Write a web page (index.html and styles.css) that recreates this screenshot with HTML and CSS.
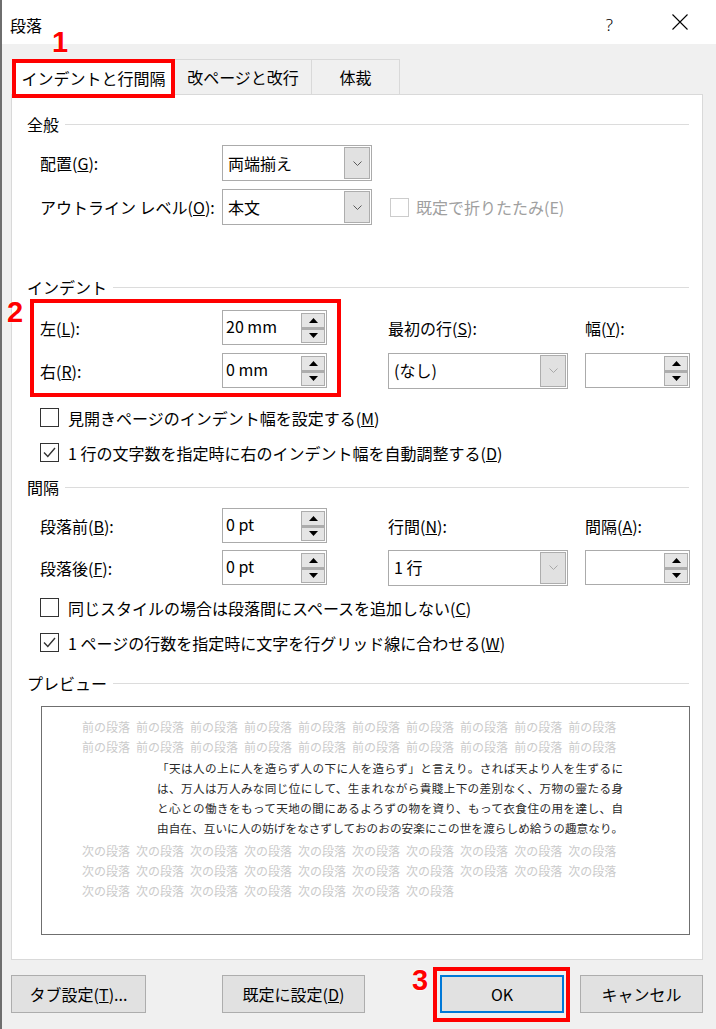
FILE: index.html
```html
<!DOCTYPE html>
<html lang="ja">
<head>
    <meta charset="UTF-8">
    <meta name="viewport" content="width=device-width, initial-scale=1.0">
    <title>段落</title>
    <link rel="stylesheet" href="styles.css">
</head>
<body>
<div class="window">
    <div class="titlebar">
        <span class="title">段落</span>
        <span class="help">?</span>
        <svg class="close" width="16" height="16" viewBox="0 0 16 16"><path d="M0.5 0.5 L15.5 15.5 M15.5 0.5 L0.5 15.5" stroke="#000" stroke-width="1.1" fill="none"/></svg>
    </div>

    <div class="main">
        <div class="tabs">
            <div class="tab tab-1 active">インデントと行間隔</div>
            <div class="tab tab-2">改ページと改行</div>
            <div class="tab tab-3">体裁</div>
        </div>

        <div class="panel">
            <!-- 全般 -->
            <section class="group">
                <div class="group-head"><span>全般</span></div>
                <div class="general-grid">
                    <div class="label">配置(<u>G</u>):</div>
                    <div class="select w150"><span class="val">両端揃え</span><span class="drop"><svg width="9" height="5" viewBox="0 0 9 5"><polyline points="0.5,0.5 4.5,4.5 8.5,0.5" fill="none" stroke="#5a5a5a"/></svg></span></div>
                    <div></div>
                    <div></div>

                    <div class="label">アウトライン レベル(<u>O</u>):</div>
                    <div class="select w150"><span class="val">本文</span><span class="drop"><svg width="9" height="5" viewBox="0 0 9 5"><polyline points="0.5,0.5 4.5,4.5 8.5,0.5" fill="none" stroke="#5a5a5a"/></svg></span></div>
                    <div></div>
                    <div class="check disabled"><span class="box"></span>既定で折りたたみ(E)</div>
                </div>
            </section>

            <!-- インデント -->
            <section class="group indent">
                <div class="group-head"><span>インデント</span></div>
                <div class="field-grid">
                    <div class="label">左(<u>L</u>):</div>
                    <div class="spin"><span class="val">20 mm</span><span class="arrows"><span class="arr"><svg width="9" height="5" viewBox="0 0 9 5"><polygon points="0,5 4.5,0 9,5" fill="#000"/></svg></span><span class="arr"><svg width="9" height="5" viewBox="0 0 9 5"><polygon points="0,0 4.5,5 9,0" fill="#000"/></svg></span></span></div>
                    <div></div>
                    <div class="label">最初の行(<u>S</u>):</div>
                    <div></div>
                    <div class="label">幅(<u>Y</u>):</div>

                    <div class="label">右(<u>R</u>):</div>
                    <div class="spin"><span class="val">0 mm</span><span class="arrows"><span class="arr"><svg width="9" height="5" viewBox="0 0 9 5"><polygon points="0,5 4.5,0 9,5" fill="#000"/></svg></span><span class="arr"><svg width="9" height="5" viewBox="0 0 9 5"><polygon points="0,0 4.5,5 9,0" fill="#000"/></svg></span></span></div>
                    <div></div>
                    <div class="select"><span class="val">(なし)</span><span class="drop"><svg width="9" height="5" viewBox="0 0 9 5"><polyline points="0.5,0.5 4.5,4.5 8.5,0.5" fill="none" stroke="#a8a8a8"/></svg></span></div>
                    <div></div>
                    <div class="spin"><span class="val"></span><span class="arrows"><span class="arr"><svg width="9" height="5" viewBox="0 0 9 5"><polygon points="0,5 4.5,0 9,5" fill="#000"/></svg></span><span class="arr"><svg width="9" height="5" viewBox="0 0 9 5"><polygon points="0,0 4.5,5 9,0" fill="#000"/></svg></span></span></div>
                </div>
                <div class="checks">
                    <div class="check"><span class="box"></span>見開きページのインデント幅を設定する(<u>M</u>)</div>
                    <div class="check"><span class="box"><svg width="13" height="11" viewBox="0 0 13 11"><polyline points="1,5.5 4.8,9.5 12,1" fill="none" stroke="#333" stroke-width="1.4"/></svg></span>1 行の文字数を指定時に右のインデント幅を自動調整する(<u>D</u>)</div>
                </div>
            </section>

            <!-- 間隔 -->
            <section class="group spacing">
                <div class="group-head"><span>間隔</span></div>
                <div class="field-grid">
                    <div class="label">段落前(<u>B</u>):</div>
                    <div class="spin"><span class="val">0 pt</span><span class="arrows"><span class="arr"><svg width="9" height="5" viewBox="0 0 9 5"><polygon points="0,5 4.5,0 9,5" fill="#000"/></svg></span><span class="arr"><svg width="9" height="5" viewBox="0 0 9 5"><polygon points="0,0 4.5,5 9,0" fill="#000"/></svg></span></span></div>
                    <div></div>
                    <div class="label">行間(<u>N</u>):</div>
                    <div></div>
                    <div class="label">間隔(<u>A</u>):</div>

                    <div class="label">段落後(<u>F</u>):</div>
                    <div class="spin"><span class="val">0 pt</span><span class="arrows"><span class="arr"><svg width="9" height="5" viewBox="0 0 9 5"><polygon points="0,5 4.5,0 9,5" fill="#000"/></svg></span><span class="arr"><svg width="9" height="5" viewBox="0 0 9 5"><polygon points="0,0 4.5,5 9,0" fill="#000"/></svg></span></span></div>
                    <div></div>
                    <div class="select"><span class="val">1 行</span><span class="drop"><svg width="9" height="5" viewBox="0 0 9 5"><polyline points="0.5,0.5 4.5,4.5 8.5,0.5" fill="none" stroke="#a8a8a8"/></svg></span></div>
                    <div></div>
                    <div class="spin"><span class="val"></span><span class="arrows"><span class="arr"><svg width="9" height="5" viewBox="0 0 9 5"><polygon points="0,5 4.5,0 9,5" fill="#000"/></svg></span><span class="arr"><svg width="9" height="5" viewBox="0 0 9 5"><polygon points="0,0 4.5,5 9,0" fill="#000"/></svg></span></span></div>
                </div>
                <div class="checks">
                    <div class="check"><span class="box"></span>同じスタイルの場合は段落間にスペースを追加しない(<u>C</u>)</div>
                    <div class="check"><span class="box"><svg width="13" height="11" viewBox="0 0 13 11"><polyline points="1,5.5 4.8,9.5 12,1" fill="none" stroke="#333" stroke-width="1.4"/></svg></span>1 ページの行数を指定時に文字を行グリッド線に合わせる(<u>W</u>)</div>
                </div>
            </section>

            <!-- プレビュー -->
            <section class="group preview-group">
                <div class="group-head"><span>プレビュー</span></div>
                <div class="preview">
                    <div class="ghost"><span>前の段落</span><span>前の段落</span><span>前の段落</span><span>前の段落</span><span>前の段落</span><span>前の段落</span><span>前の段落</span><span>前の段落</span><span>前の段落</span><span>前の段落</span></div>
                    <div class="ghost"><span>前の段落</span><span>前の段落</span><span>前の段落</span><span>前の段落</span><span>前の段落</span><span>前の段落</span><span>前の段落</span><span>前の段落</span><span>前の段落</span><span>前の段落</span></div>
                    <div class="sample">
                        <div>「天は人の上に人を造らず人の下に人を造らず」と言えり。されば天より人を生ずるに</div>
                        <div>は、万人は万人みな同じ位にして、生まれながら貴賤上下の差別なく、万物の靈たる身</div>
                        <div>と心との働きをもって天地の間にあるよろずの物を資り、もって衣食住の用を達し、自</div>
                        <div>由自在、互いに人の妨げをなさずしておのおの安楽にこの世を渡らしめ給うの趣意なり。</div>
                    </div>
                    <div class="ghost"><span>次の段落</span><span>次の段落</span><span>次の段落</span><span>次の段落</span><span>次の段落</span><span>次の段落</span><span>次の段落</span><span>次の段落</span><span>次の段落</span><span>次の段落</span></div>
                    <div class="ghost"><span>次の段落</span><span>次の段落</span><span>次の段落</span><span>次の段落</span><span>次の段落</span><span>次の段落</span><span>次の段落</span><span>次の段落</span><span>次の段落</span><span>次の段落</span></div>
                    <div class="ghost"><span>次の段落</span><span>次の段落</span><span>次の段落</span><span>次の段落</span><span>次の段落</span><span>次の段落</span><span>次の段落</span></div>
                </div>
            </section>
        </div>

        <div class="buttons">
            <button class="btn btn-tabs">タブ設定(<u>T</u>)...</button>
            <button class="btn btn-default">既定に設定(<u>D</u>)</button>
            <button class="btn btn-ok">OK</button>
            <button class="btn btn-cancel">キャンセル</button>
        </div>
    </div>
</div>

<!-- 説明用の赤い番号と枠 -->
<span class="mark mark-1">1</span>
<span class="mark mark-2">2</span>
<span class="mark mark-3">3</span>
<div class="redbox redbox-1"></div>
<div class="redbox redbox-2"></div>
<div class="redbox redbox-3"></div>
</body>
</html>
```

FILE: styles.css
```css
body {
    margin: 0;
    background-color: #f0f0f0;
    font-family: "Noto Sans CJK JP", "Noto Sans", sans-serif;
    font-size: 16px;
    color: #000;
}
.window {
    width: 714px;
    height: 1029px;
    border-left: 2px solid #6e6e6e;
    background-color: #f0f0f0;
    overflow: hidden;
}
.titlebar {
    height: 44px;
    box-sizing: border-box;
    padding-top: 5px;
    background-color: #fff;
    display: flex;
    align-items: center;
    padding-left: 8px;
}
.title {
    font-size: 16px;
    line-height: 20px;
}
.help {
    margin-left: auto;
    font-family: "Noto Sans", sans-serif;
    font-size: 17px;
    font-weight: 300;
    line-height: 20px;
}
.close {
    margin-left: 59px;
    margin-right: 28px;
    margin-bottom: 6px;
}
.main {
    padding-top: 15px;
}
.tabs {
    display: flex;
    margin-left: 10px;
    height: 35px;
    position: relative;
    z-index: 1;
}
.tab {
    height: 35px;
    box-sizing: border-box;
    border: 1px solid #d9d9d9;
    border-bottom: none;
    border-left: none;
    display: flex;
    align-items: center;
    justify-content: center;
    font-size: 16px;
}
.tab-1 { width: 163px; }
.tab-2 { width: 137px; }
.tab-3 { width: 88px; }
.tab.active {
    background-color: #fff;
    height: 36px;
    border-left: 1px solid #d9d9d9;
}
.panel {
    margin-left: 9px;
    width: 692px;
    box-sizing: border-box;
    background-color: #fff;
    border: 1px solid #d9d9d9;
    padding: 17px 13px 24px 15px;
}
.group-head {
    display: flex;
    align-items: center;
    height: 24px;
    line-height: 24px;
    gap: 6px;
}
.group-head::after {
    content: "";
    flex: 1;
    height: 1px;
    background-color: #dcdcdc;
}
.indent { margin-top: 50px; }
.spacing { margin-top: 5px; }
.preview-group { margin-top: 11px; }

.general-grid {
    display: grid;
    grid-template-columns: 182px 150px 18px auto;
    grid-template-rows: 36px 36px;
    row-gap: 8px;
    margin: 9px 0 0 13px;
    align-items: center;
}
.field-grid {
    display: grid;
    grid-template-columns: 182px 105px 61px 180px 17px 105px;
    grid-template-rows: 35px 35px;
    row-gap: 8px;
    margin: 11px 0 0 13px;
    align-items: center;
}
.spacing .field-grid {
    margin-top: 9px;
    row-gap: 7px;
}
.label {
    line-height: 22px;
    white-space: nowrap;
}
.select {
    height: 36px;
    box-sizing: border-box;
    border: 1px solid #ababab;
    background-color: #fff;
    display: flex;
    align-items: center;
    padding-left: 5px;
}
.select .val {
    flex: 1;
    padding-bottom: 1px;
}
.drop {
    width: 26px;
    height: 32px;
    margin-right: 1px;
    box-sizing: border-box;
    background-color: #e1e1e1;
    border: 1px solid #adadad;
    display: flex;
    align-items: center;
    justify-content: center;
}
.spin {
    height: 35px;
    box-sizing: border-box;
    border: 1px solid #ababab;
    background-color: #fff;
    display: flex;
    align-items: center;
    padding-left: 3px;
}
.spin .val {
    flex: 1;
    padding-bottom: 4px;
}
.arrows {
    display: flex;
    flex-direction: column;
    width: 24px;
    margin-right: 1px;
}
.arr {
    height: 15px;
    box-sizing: border-box;
    background-color: #e5e5e5;
    border: 1px solid #adadad;
    display: flex;
    align-items: center;
    justify-content: center;
}
.arr + .arr { border-top: 2px solid #adadad; }
.checks {
    margin: 12px 0 0 13px;
}
.spacing .checks { margin-top: 5px; }
.check {
    display: flex;
    align-items: center;
    height: 35px;
    white-space: nowrap;
}
.check .box {
    width: 19px;
    height: 19px;
    box-sizing: border-box;
    border: 1px solid #333;
    margin-right: 9px;
    display: flex;
    align-items: center;
    justify-content: center;
}
.check.disabled {
    color: #a0a0a0;
    height: 36px;
}
.check.disabled .box {
    border-color: #cccccc;
    margin-right: 7px;
}
.preview {
    margin: 11px 0 0 14px;
    width: 649px;
    height: 229px;
    box-sizing: border-box;
    border: 1px solid #6f6f6f;
    padding: 11px 0 0 40px;
    font-family: "Liberation Serif", "Noto Sans CJK JP", serif;
}
.ghost {
    display: flex;
    gap: 6px;
    font-size: 12px;
    line-height: 20px;
    color: #cbcbcb;
    white-space: nowrap;
}
.sample {
    margin-left: 75px;
    width: 466px;
    padding: 2px 0;
    font-size: 11.6px;
    line-height: 20px;
    color: #2a2a2a;
}
.sample div {
    text-align: justify;
    text-align-last: justify;
    white-space: nowrap;
}
.buttons {
    display: flex;
    margin-top: 15px;
}
.btn {
    height: 38px;
    box-sizing: border-box;
    border: 1px solid #adadad;
    background-color: #e1e1e1;
    font-family: "Noto Sans CJK JP", "Noto Sans", sans-serif;
    font-size: 16px;
    color: #000;
    padding: 0;
}
.btn-tabs { margin-left: 9px; width: 135px; }
.btn-default { margin-left: 76px; width: 143px; }
.btn-ok {
    margin-left: 75px;
    width: 124px;
    border: 2px solid #0078d7;
}
.btn-cancel { margin-left: 16px; width: 123px; }

.mark {
    position: absolute;
    z-index: 5;
    font-family: "Liberation Sans", Arial, sans-serif;
    font-weight: bold;
    font-size: 29px;
    line-height: 29px;
    color: #f00;
    text-shadow: 0 0 2px #fff, 0 0 2px #fff;
}
.mark-1 { left: 52px; top: 28px; }
.mark-2 { left: 7px; top: 298px; }
.mark-3 { left: 412px; top: 966px; }
.redbox {
    position: absolute;
    z-index: 5;
    box-sizing: border-box;
    border: 4px solid #f00;
}
.redbox-1 { left: 12px; top: 59px; width: 163px; height: 39px; }
.redbox-2 { left: 30px; top: 299px; width: 311px; height: 98px; }
.redbox-3 { left: 433px; top: 967px; width: 137px; height: 55px; }
```
